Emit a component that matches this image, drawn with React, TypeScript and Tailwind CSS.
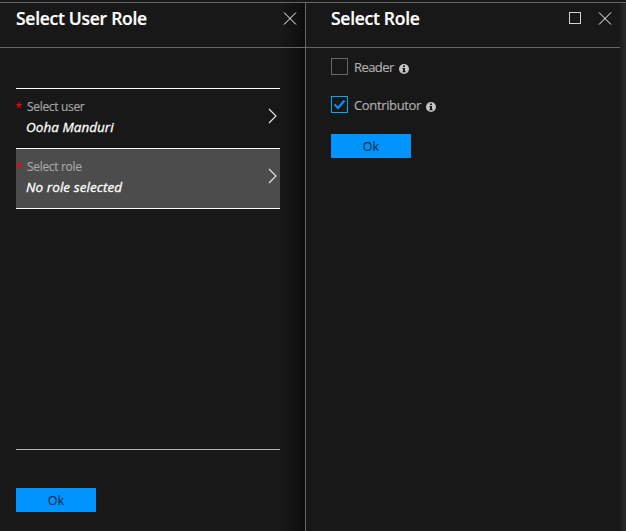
import type { ReactNode } from "react";

function CloseIcon() {
  return (
    <svg width="14" height="14" viewBox="0 0 14 14" fill="none" stroke="#ffffff" strokeWidth="1">
      <path d="M1 0.5L13 12.5M13 0.5L1 12.5" />
    </svg>
  );
}

function MaximizeIcon() {
  return (
    <svg width="12" height="12" viewBox="0 0 12 12" className="mb-[3px]" fill="none" stroke="#d4d4d4" shapeRendering="crispEdges">
      <rect x="0.5" y="0.5" width="11" height="11" />
    </svg>
  );
}

function InfoIcon() {
  return (
    <svg width="10" height="10" viewBox="0 0 10 10" className="mt-[5px] shrink-0">
      <circle cx="5" cy="5" r="5" fill="#c4c4c4" />
      <path d="M4 1.5h2v1.6H4zM3.4 4H6v3.3h.7v1H3.4v-1H4V5h-.6z" fill="#181818" />
    </svg>
  );
}

function PickerRow({ label, value, selected, valueClass }: { label: string; value: string; selected?: boolean; valueClass: string }) {
  return (
    <div className={"relative flex h-[60px] justify-between border-b border-white " + (selected ? "bg-[#4c4c4c]" : "")}>
      <svg width="6" height="6" viewBox="0 0 6 6" className="absolute left-0 top-[13px]" stroke="#ff0000" strokeWidth="1.1">
        <path d="M3 0V3L0.2 2.2M3 3L5.8 2.2M3 3L1.2 5.6M3 3L4.8 5.6" fill="none" />
      </svg>
      <div className="flex flex-col pl-[10px] pt-[9px]">
        <span className="pl-px text-[12px] leading-[18px] tracking-[-0.32px] text-[#a8a8a8] [-webkit-text-stroke:0.15px_#a8a8a8]">{label}</span>
        <span className={"mt-px text-[13.5px] font-medium italic leading-[20px] text-white [-webkit-text-stroke:0.3px_#ffffff] " + valueClass}>{value}</span>
      </div>
      <svg width="10" height="16" viewBox="0 0 10 16" className="mr-[2px] mt-[19px]" fill="none" stroke="#e8e8e8" strokeWidth="1.1">
        <path d="M1 1L8 8L1 15" />
      </svg>
    </div>
  );
}

function CheckRow({ label, checked, labelClass }: { label: string; checked?: boolean; labelClass: string }) {
  return (
    <label className="flex h-[17px] items-center">
      <span className={"flex size-[17px] items-center justify-center border " + (checked ? "border-[#00a8f0]" : "border-[#686868]")}>
        {checked && (
          <svg width="13" height="11" viewBox="0 0 13 11" fill="none" stroke="#0a94ff" strokeWidth="2">
            <path d="M1.5 5.5L5 9L11.5 1.5" />
          </svg>
        )}
      </span>
      <span className={"ml-[6px] mr-[5px] pt-[2px] text-[13px] leading-[17px] text-[#b0b0b0] [-webkit-text-stroke:0.15px_#b0b0b0] " + labelClass}>{label}</span>
      <InfoIcon />
    </label>
  );
}

function OkButton() {
  return (
    <button className="h-6 w-20 shrink-0 bg-[#0094ff] pt-px text-[12.5px] leading-[23px] text-[#10304c] [-webkit-text-stroke:0.15px_#10304c]">Ok</button>
  );
}

function Header({ title, children }: { title: string; children: ReactNode }) {
  return (
    <header className="flex h-[45px] shrink-0 justify-between border-b border-[#686868]">
      <h1 className="pt-[3px] text-[17.5px] font-semibold leading-[24px] tracking-[-0.28px] text-white [-webkit-text-stroke:0.2px_#ffffff]">{title}</h1>
      <div className="flex items-start gap-[17px] pt-[9px]">{children}</div>
    </header>
  );
}

export default function App() {
  return (
    <div className="h-[531px] w-[626px] overflow-hidden bg-[#181818] pt-[2px] font-['Open_Sans','Noto_Sans',sans-serif]">
      <div className="flex h-[529px] border-t border-[#686868]">
        <section className="flex w-[305px] flex-col bg-[linear-gradient(to_right,#181818_280px,#111111_297px,#0b0b0b_305px)]">
          <div className="[&>header]:pl-4 [&>header]:pr-2">
            <Header title="Select User Role">
              <CloseIcon />
            </Header>
          </div>
          <div className="ml-4 mt-[40px] flex h-[362px] w-[264px] flex-col border-b border-t border-b-[#b4b4b4] border-t-white">
            <PickerRow label="Select user" value="Ooha Manduri" valueClass="tracking-[0.03px]" />
            <PickerRow label="Select role" value="No role selected" selected valueClass="tracking-[0.07px]" />
          </div>
          <div className="ml-4 mt-[38px] flex">
            <OkButton />
          </div>
        </section>
        <section className="flex w-[315px] flex-col border-l border-[#686868]">
          <div className="[&>header]:pl-[25px] [&>header]:pr-[8px]">
            <Header title="Select Role">
              <MaximizeIcon />
              <CloseIcon />
            </Header>
          </div>
          <div className="flex flex-col items-start pl-[25px] pt-[10px]">
            <CheckRow label="Reader" labelClass="tracking-[-0.56px]" />
            <div className="mb-[21px] mt-[21px]">
              <CheckRow label="Contributor" checked labelClass="tracking-[-0.36px]" />
            </div>
            <OkButton />
          </div>
        </section>
        <div className="w-[6px] bg-gradient-to-r from-[#1d1d1d] to-[#292929]" />
      </div>
    </div>
  );
}
